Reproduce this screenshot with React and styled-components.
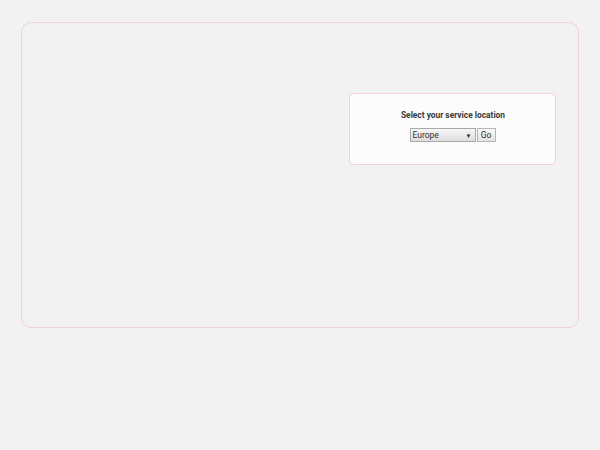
import React from "react";
import styled, { createGlobalStyle } from "styled-components";

const Global = createGlobalStyle`
  html, body { margin: 0; padding: 0; background: #f2f2f2; }
  body { font-family: Roboto, "Liberation Sans", sans-serif; }
`;

const Page = styled.div`
  padding: 22px 0 0 21px;
`;

const Frame = styled.div`
  box-sizing: border-box;
  width: 558px;
  height: 306px;
  border: 1px solid #f3cfd6;
  border-radius: 10px;
  background: #f2f2f2;
  display: flex;
  justify-content: flex-end;
  align-items: flex-start;
  padding: 70px 22px 0 0;
`;

const Panel = styled.div`
  box-sizing: border-box;
  width: 207px;
  height: 72px;
  border: 1px solid #f3cfd6;
  border-radius: 5px;
  background: #fcfcfc;
  display: flex;
  flex-direction: column;
  align-items: center;
  padding-top: 15px;
`;

const Title = styled.div`
  font-size: 8.4px;
  font-weight: 700;
  color: #3a3a3a;
  line-height: 12px;
  margin-left: 1px;
`;

const Row = styled.div`
  display: flex;
  gap: 1px;
  margin-top: 7px;
`;

const Select = styled.div`
  box-sizing: border-box;
  width: 66px;
  height: 14px;
  border: 1px solid #a9a9a9;
  background: linear-gradient(#f6f6f6, #dedede);
  display: flex;
  align-items: center;
  justify-content: space-between;
  padding: 0 3px 0 2px;
  font-size: 8.5px;
  color: #333;
`;

const Arrow = styled.span`
  font-size: 6px;
  color: #222;
`;

const Button = styled.button`
  box-sizing: border-box;
  height: 14px;
  width: 19px;
  padding: 0;
  border: 1px solid #b5b5b5;
  background: linear-gradient(#f8f8f8, #e3e3e3);
  font-family: Roboto, "Liberation Sans", sans-serif;
  font-size: 8.5px;
  color: #333;
  line-height: 12px;
`;

export default function App() {
  return (
    <>
      <Global />
      <Page>
        <Frame>
          <Panel>
            <Title>Select your service location</Title>
            <Row>
              <Select>
                <span>Europe</span>
                <Arrow>▼</Arrow>
              </Select>
              <Button>Go</Button>
            </Row>
          </Panel>
        </Frame>
      </Page>
    </>
  );
}
